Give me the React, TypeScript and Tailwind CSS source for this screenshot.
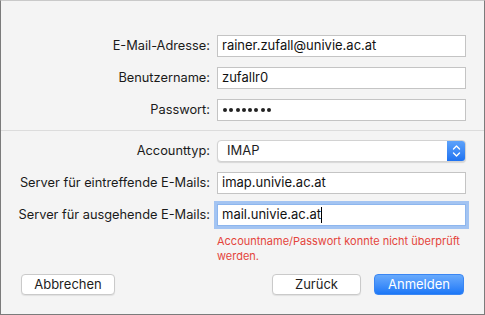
import React from "react";

const font = { fontFamily: "Inter, 'Liberation Sans', sans-serif" };

function Row({ label, children }: { label: string; children: React.ReactNode }) {
  return (
    <div className="flex items-center h-[22px]">
      <div className="w-[210px] text-right text-[12.8px] text-[#1a1a1a] pr-[1px]">{label}</div>
      <div className="ml-[6px] w-[249px] h-[22px]">{children}</div>
    </div>
  );
}

function Field({ value, focus }: { value: string; focus?: boolean }) {
  return (
    <div
      className={
        "h-full w-full bg-white border flex items-center px-[4px] text-[13px] text-[#111] " +
        (focus ? "border-[#8db6ee] ring-[3px] ring-[#a3c4f2]" : "border-[#c4c4c4]")
      }
    >
      <span>{value}</span>
      {focus && <span className="w-[1px] h-[16px] bg-black" />}
    </div>
  );
}

export default function App() {
  return (
    <div
      style={font}
      className="w-[485px] h-[315px] bg-[#f4f4f4] border-l border-r border-b border-[#7b7b7b] border-t-[#c9c9c9] border-t flex flex-col"
    >
      <div className="pt-[34px] flex flex-col gap-[10px]">
        <Row label="E-Mail-Adresse:">
          <Field value="rainer.zufall@univie.ac.at" />
        </Row>
        <Row label="Benutzername:">
          <Field value="zufallr0" />
        </Row>
        <Row label="Passwort:">
          <div className="h-full w-full bg-white border border-[#c4c4c4] flex items-center px-[5px] gap-[2.3px]">
            {Array.from({ length: 8 }).map((_, i) => (
              <span key={i} className="w-[4px] h-[4px] rounded-full bg-[#222]" />
            ))}
          </div>
        </Row>
      </div>
      <div className="mt-[9px] h-[1px] bg-[#dcdcdc]" />
      <div className="pt-[9px] flex flex-col gap-[10px]">
        <Row label="Accounttyp:">
          <div className="h-full w-full bg-white rounded-[4px] border border-[#d2d2d2] shadow-[0_1px_1px_rgba(0,0,0,0.12)] flex items-center overflow-hidden">
            <span className="pl-[9px] flex-1 text-[13px] text-[#1d1d1d]">IMAP</span>
            <div className="w-[18px] h-full bg-gradient-to-b from-[#5da2fa] to-[#1e72f1] flex items-center justify-center">
              <svg width="9" height="14" viewBox="0 0 9 14" fill="none" stroke="white" strokeWidth="1.4" strokeLinecap="round" strokeLinejoin="round">
                <path d="M1.5 5 L4.5 2 L7.5 5" />
                <path d="M1.5 9 L4.5 12 L7.5 9" />
              </svg>
            </div>
          </div>
        </Row>
        <Row label="Server für eintreffende E-Mails:">
          <Field value="imap.univie.ac.at" />
        </Row>
        <Row label="Server für ausgehende E-Mails:">
          <Field value="mail.univie.ac.at" focus />
        </Row>
      </div>
      <div className="ml-[216px] mt-[8px] text-[11px] leading-[15px] text-[#e4453c] w-[250px]">
        Accountname/Passwort konnte nicht überprüft werden.
      </div>
      <div className="mt-[10px] flex items-center px-[20px]">
        <button className="w-[94px] h-[21px] bg-white border border-[#cacaca] rounded-[4px] shadow-[0_1px_1px_rgba(0,0,0,0.08)] text-[13px] text-[#1d1d1d]">
          Abbrechen
        </button>
        <div className="flex-1" />
        <button className="w-[89px] h-[21px] bg-white border border-[#cacaca] rounded-[4px] shadow-[0_1px_1px_rgba(0,0,0,0.08)] text-[13px] text-[#1d1d1d]">
          Zurück
        </button>
        <button className="ml-[13px] w-[90px] h-[21px] rounded-[4px] bg-gradient-to-b from-[#68aafc] to-[#1a77f7] border border-[#3a86f3] text-[13px] text-white">
          Anmelden
        </button>
      </div>
    </div>
  );
}
